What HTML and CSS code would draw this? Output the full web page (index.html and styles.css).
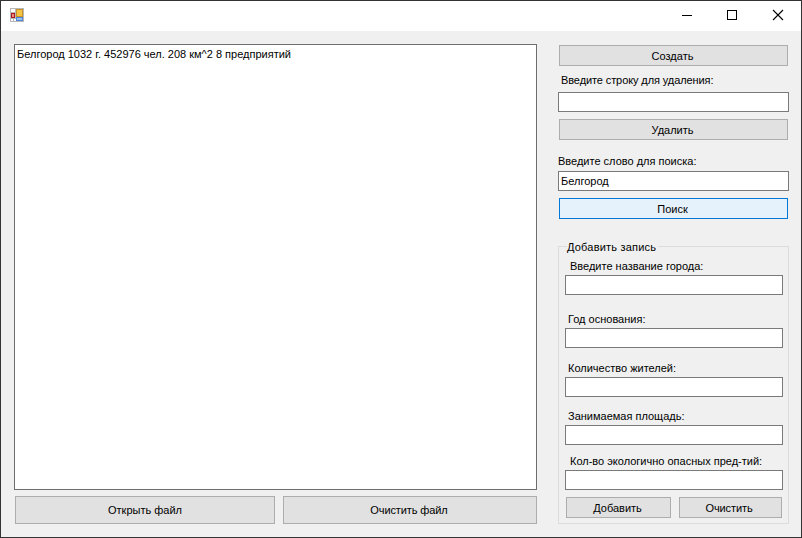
FILE: index.html
```html
<!DOCTYPE html>
<html lang="ru">
<head>
<meta charset="utf-8">
<title>Города</title>
<link rel="stylesheet" href="styles.css">
</head>
<body>
<div class="window">
  <header class="titlebar">
    <svg class="app-icon" width="14" height="14" viewBox="0 0 14 14">
      <rect x="0" y="0" width="14" height="14" fill="#b8b8b8"/>
      <rect x="1" y="1" width="4" height="3" fill="#fff"/>
      <rect x="1" y="11" width="2" height="2" fill="#fff"/>
      <rect x="4" y="11" width="2" height="2" fill="#fff"/>
      <rect x="1" y="5" width="4" height="5" fill="#a81c1c"/>
      <rect x="2" y="6" width="2" height="3" fill="#e88"/>
      <rect x="6" y="1" width="7" height="8" fill="#c8922a"/>
      <rect x="7" y="2" width="5" height="6" fill="#f5c542"/>
      <rect x="6" y="9" width="7" height="4" fill="#4f85d6"/>
      <rect x="7" y="10" width="5" height="2" fill="#9cc0f0"/>
    </svg>
    <div class="caption-buttons">
      <svg class="caption-btn" width="46" height="30" viewBox="0 0 46 30"><path d="M19 14.5H29" stroke="#000" fill="none"/></svg>
      <svg class="caption-btn" width="46" height="30" viewBox="0 0 46 30"><rect x="18.5" y="9.5" width="9" height="9" stroke="#000" fill="none"/></svg>
      <svg class="caption-btn" width="46" height="30" viewBox="0 0 46 30"><path d="M18 9L28 19M28 9L18 19" stroke="#000" fill="none" stroke-width="1.1"/></svg>
    </div>
  </header>
  <main class="client">
    <section class="left">
      <div class="listbox">Белгород 1032 г. 452976 чел. 208 км^2 8 предприятий</div>
      <div class="file-actions">
        <button class="btn btn-open" type="button">Открыть файл</button>
        <button class="btn btn-clear" type="button">Очистить файл</button>
      </div>
    </section>
    <aside class="right">
      <button class="btn btn-wide btn-create" type="button">Создать</button>
      <label class="label label-del">Введите строку для удаления:</label>
      <div class="input input-del"></div>
      <button class="btn btn-wide btn-delete" type="button">Удалить</button>
      <label class="label label-search">Введите слово для поиска:</label>
      <div class="input input-search">Белгород</div>
      <button class="btn btn-wide btn-focus" type="button">Поиск</button>
      <div class="group">
        <div class="legend">Добавить запись</div>
        <label class="label glabel g1">Введите название города:</label>
        <div class="input ginput"></div>
        <label class="label glabel g2">Год основания:</label>
        <div class="input ginput"></div>
        <label class="label glabel g3">Количество жителей:</label>
        <div class="input ginput"></div>
        <label class="label glabel g4">Занимаемая площадь:</label>
        <div class="input ginput"></div>
        <label class="label glabel g5">Кол-во экологично опасных пред-тий:</label>
        <div class="input ginput"></div>
        <div class="group-actions">
          <button class="btn btn-add" type="button">Добавить</button>
          <button class="btn btn-reset" type="button">Очистить</button>
        </div>
      </div>
    </aside>
  </main>
</div>
</body>
</html>
```
FILE: styles.css
```css
* { box-sizing: border-box; }
html, body { margin: 0; padding: 0; }
body {
  width: 802px;
  height: 538px;
  overflow: hidden;
  font-family: "Liberation Sans", Arial, sans-serif;
  font-size: 11px;
  color: #000;
}
.window {
  width: 802px;
  height: 538px;
  border: 1px solid #333;
  background: #f0f0f0;
  display: flex;
  flex-direction: column;
}
.titlebar {
  height: 30px;
  flex: none;
  background: #fff;
  display: flex;
  align-items: flex-start;
  justify-content: space-between;
}
.app-icon { margin: 7px 0 0 9px; display: block; }
.caption-buttons { display: flex; }
.caption-btn { display: block; }
.client { flex: 1; display: flex; min-height: 0; }
.left { width: 536px; padding: 13px 0 0 13px; flex: none; }
.listbox {
  width: 523px;
  height: 446px;
  border: 1px solid #6e6e6e;
  background: #fff;
  padding: 2px 2px;
  line-height: 14px;
}
.file-actions { display: flex; margin-top: 6px; padding-left: 1px; }
.btn {
  display: block;
  padding: 0;
  border: 1px solid #adadad;
  background: #e1e1e1;
  font: inherit;
  color: #000;
  text-align: center;
}
.btn-open { width: 260px; height: 28px; }
.btn-clear { width: 254px; height: 28px; margin-left: 8px; padding-right: 2px; letter-spacing: -0.1px; }
.right { width: 232px; margin-left: 21px; padding-top: 14px; flex: none; }
.btn-wide { width: 229px; height: 21px; margin-left: 1px; padding-right: 2px; }
.btn-focus { border-color: #0078d7; background: #e5f1fb; margin-top: 7px; }
.label { display: block; height: 14px; line-height: 14px; white-space: nowrap; }
.input {
  width: 231px;
  height: 20px;
  border: 1px solid #7a7a7a;
  background: #fff;
  padding: 0 2px;
  line-height: 18px;
}
.label-del { margin: 7px 0 0 3px; letter-spacing: -0.1px; }
.input-del { margin-top: 5px; }
.btn-delete { margin-top: 7px; }
.label-search { margin-top: 14px; }
.input-search { margin-top: 3px; }
.group {
  width: 231px;
  height: 278px;
  margin-top: 27px;
  border: 1px solid #dcdcdc;
  padding: 0 6px;
}
.legend {
  width: fit-content;
  height: 14px;
  line-height: 14px;
  margin: -7px 0 0 2px;
  padding: 0 2px 0 0;
  background: #f0f0f0;
  letter-spacing: 0.2px;
}
.glabel { margin-top: 2px; }
.ginput { width: 218px; margin-top: 2px; }
.g1 { margin-top: 5px; margin-left: 5px; }
.g2 { margin-top: 17px; margin-left: 3px; }
.g3 { margin-top: 13px; margin-left: 3px; }
.g4 { margin-top: 12px; margin-left: 3px; }
.g5 { margin-top: 9px; margin-left: 5px; }
.group-actions { display: flex; margin-top: 7px; padding-left: 1px; }
.btn-add { width: 105px; height: 21px; padding-right: 2px; }
.btn-reset { width: 103px; height: 21px; margin-left: 8px; padding-right: 3px; letter-spacing: -0.1px; }
```
